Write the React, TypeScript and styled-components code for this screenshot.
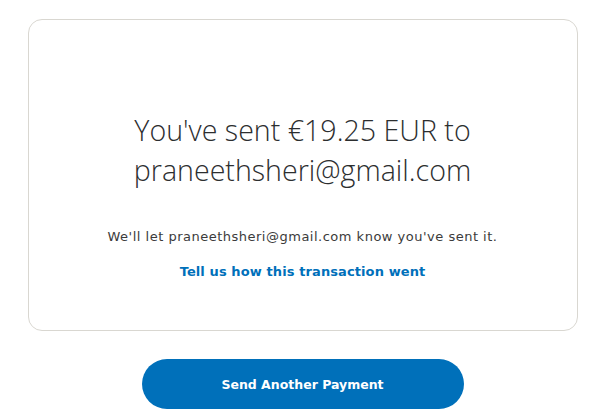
import React from "react";
import styled, { createGlobalStyle } from "styled-components";

const Global = createGlobalStyle`
  html, body { margin: 0; padding: 0; background: #ffffff; }
  * { box-sizing: border-box; }
`;

const Page = styled.main`
  width: 605px;
  padding-top: 19px;
  display: flex;
  flex-direction: column;
  align-items: center;
`;

const Card = styled.section`
  width: 550px;
  height: 312px;
  border: 1px solid #d9d7d1;
  border-radius: 14px;
  padding-top: 90px;
  display: flex;
  flex-direction: column;
  align-items: center;
  text-align: center;
`;

const Heading = styled.h1`
  margin: 0;
  font-family: "Open Sans", sans-serif;
  font-weight: 300;
  font-size: 28.6px;
  line-height: 40px;
  color: #2c2e2f;
  width: 420px;
`;

const Note = styled.p`
  margin: 37px 0 0;
  font-family: "DejaVu Sans", Verdana, sans-serif;
  font-size: 13px;
  letter-spacing: 0.5px;
  line-height: 20px;
  color: #3b3b3b;
`;

const Link = styled.a`
  margin-top: 15px;
  font-family: "DejaVu Sans", Verdana, sans-serif;
  font-weight: 700;
  font-size: 13px;
  letter-spacing: 0.1px;
  line-height: 20px;
  color: #0070ba;
  text-decoration: none;
`;

const Button = styled.button`
  margin-top: 28px;
  width: 322px;
  height: 50px;
  border: none;
  border-radius: 25px;
  background: #0070ba;
  color: #ffffff;
  font-family: "DejaVu Sans", Verdana, sans-serif;
  font-weight: 700;
  font-size: 12.5px;
`;

export default function App() {
  return (
    <>
      <Global />
      <Page>
        <Card>
          <Heading>You've sent €19.25 EUR to praneethsheri@gmail.com</Heading>
          <Note>We'll let praneethsheri@gmail.com know you've sent it.</Note>
          <Link href="#">Tell us how this transaction went</Link>
        </Card>
        <Button>Send Another Payment</Button>
      </Page>
    </>
  );
}
